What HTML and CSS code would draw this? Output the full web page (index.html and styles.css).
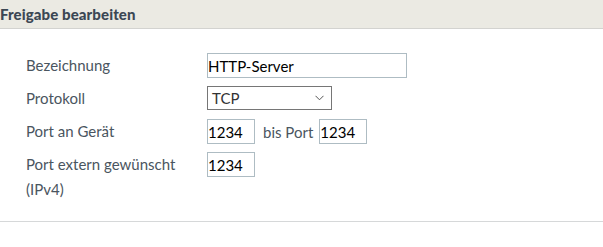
FILE: index.html
```html
<!DOCTYPE html>
<html lang="de">
<head>
<meta charset="utf-8">
<link rel="stylesheet" href="styles.css">
</head>
<body>
<div class="panel">
  <div class="header"><h2 class="title">Freigabe bearbeiten</h2></div>
  <div class="form">
    <div class="row">
      <div class="label">Bezeichnung</div>
      <div class="field"><input class="inp inp-wide" type="text" value="HTTP-Server"></div>
    </div>
    <div class="row">
      <div class="label">Protokoll</div>
      <div class="field">
        <div class="select"><span class="select-text">TCP</span>
          <svg class="chev" width="9" height="6" viewBox="0 0 9 6"><path d="M0.5 0.8 L4.5 4.8 L8.5 0.8" fill="none" stroke="#555" stroke-width="1"/></svg>
        </div>
      </div>
    </div>
    <div class="row">
      <div class="label">Port an Gerät</div>
      <div class="field"><input class="inp inp-port" type="text" value="1234"><span class="bis">bis Port</span><input class="inp inp-port" type="text" value="1234"></div>
    </div>
    <div class="row">
      <div class="label label-multi">Port extern gewünscht<br>(IPv4)</div>
      <div class="field"><input class="inp inp-port" type="text" value="1234"></div>
    </div>
  </div>
</div>
</body>
</html>
```
FILE: styles.css
```css
html, body { margin: 0; padding: 0; background: #fff; }
body { font-family: "Lato", "Open Sans", sans-serif; width: 603px; height: 247px; overflow: hidden; }
.panel { width: 603px; }
.header { background: #ebeae3; height: 28px; border-bottom: 1px solid #d3d3d0; display: flex; align-items: center; }
.title { margin: 0; font-size: 15px; font-weight: 900; color: #3b4754; letter-spacing: 0.1px; }
.form { padding: 24px 0 0 26px; border-bottom: 1px solid #d6d8d9; height: 193px; box-sizing: border-box; }
.row { display: flex; align-items: flex-start; margin-bottom: 8px; }
.label { width: 181px; font-size: 15px; color: #4a5560; line-height: 25px; }
.label-multi { line-height: 25px; }
.field { display: flex; align-items: center; }
.inp { box-sizing: border-box; height: 25px; border: 1px solid #aebcc3; padding: 0; font-family: "Lato", sans-serif; font-size: 15px; color: #000; outline: none; margin: 0; }
.inp-wide { width: 200px; }
.inp-port { width: 48px; }
.bis { font-size: 15px; color: #4a5560; margin: 0 6px 0 8px; }
.select { box-sizing: border-box; width: 125px; height: 24px; border: 1px solid #767676; display: flex; align-items: center; justify-content: space-between; padding: 0 7px 0 4px; }
.select-text { font-size: 15px; color: #333; }
.chev { display: block; }
```
